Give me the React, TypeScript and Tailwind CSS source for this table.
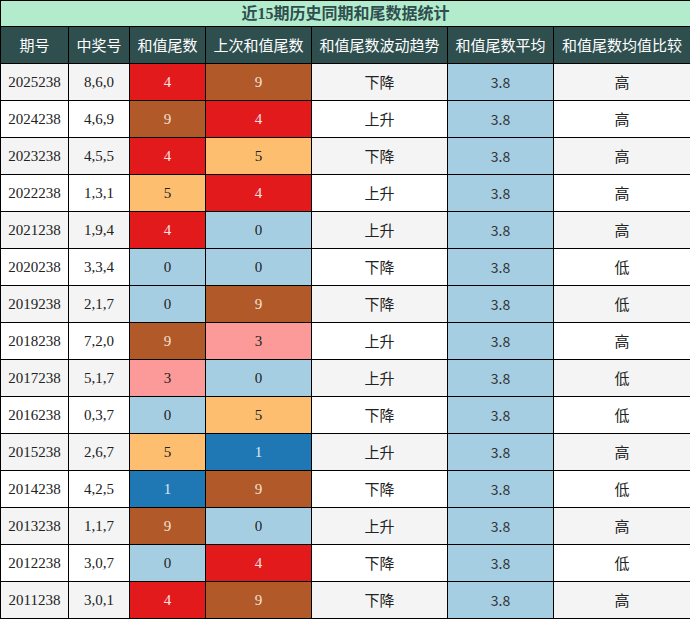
const rows: [string, string, number, number, string, string][] = [
  ['2025238', '8,6,0', 4, 9, '下降', '高'],
  ['2024238', '4,6,9', 9, 4, '上升', '高'],
  ['2023238', '4,5,5', 4, 5, '下降', '高'],
  ['2022238', '1,3,1', 5, 4, '上升', '高'],
  ['2021238', '1,9,4', 4, 0, '上升', '高'],
  ['2020238', '3,3,4', 0, 0, '下降', '低'],
  ['2019238', '2,1,7', 0, 9, '下降', '低'],
  ['2018238', '7,2,0', 9, 3, '上升', '高'],
  ['2017238', '5,1,7', 3, 0, '上升', '低'],
  ['2016238', '0,3,7', 0, 5, '下降', '低'],
  ['2015238', '2,6,7', 5, 1, '上升', '高'],
  ['2014238', '4,2,5', 1, 9, '下降', '低'],
  ['2013238', '1,1,7', 9, 0, '上升', '高'],
  ['2012238', '3,0,7', 0, 4, '下降', '低'],
  ['2011238', '3,0,1', 4, 9, '下降', '高'],
];

// colour per tail digit
const tailColor: Record<number, string> = {
  0: 'bg-[#a6cee3] text-[#222]',
  1: 'bg-[#1f78b4] text-[#dfeaf3]',
  3: 'bg-[#fb9a99] text-[#222]',
  4: 'bg-[#e31a1c] text-[#fbe3e3]',
  5: 'bg-[#fdbf6f] text-[#222]',
  9: 'bg-[#b15928] text-[#f3e2d6]',
};

const serif = { fontFamily: '"Liberation Serif", "Noto Serif CJK SC", serif' };
const cjk = { fontFamily: '"Noto Sans CJK SC", "Noto Sans", sans-serif' };

export default function App() {
  const headers = ['期号', '中奖号', '和值尾数', '上次和值尾数', '和值尾数波动趋势', '和值尾数平均', '和值尾数均值比较'];
  return (
    <div className="w-[690px] h-[619px] bg-white">
      <table className="w-[690px] table-fixed border-collapse border border-black text-center">
        <colgroup>
          <col className="w-[68px]" />
          <col className="w-[61px]" />
          <col className="w-[76px]" />
          <col className="w-[106px]" />
          <col className="w-[136px]" />
          <col className="w-[106px]" />
          <col className="w-[137px]" />
        </colgroup>
        <thead>
          <tr className="h-[26px]">
            <th
              colSpan={7}
              className="border border-black bg-[#b3eccd] text-[#2f4f4f] text-[16px] font-bold p-0"
              style={{ fontFamily: '"Liberation Serif", "Noto Sans CJK SC", serif' }}
            >
              近15期历史同期和尾数据统计
            </th>
          </tr>
          <tr className="h-[37px]">
            {headers.map((h) => (
              <th key={h} className="border border-black bg-[#2f4f4f] text-white text-[15px] font-normal p-0" style={cjk}>
                {h}
              </th>
            ))}
          </tr>
        </thead>
        <tbody>
          {rows.map((r, i) => {
            const bg = i % 2 === 0 ? 'bg-[#f4f4f4]' : 'bg-white';
            return (
              <tr key={r[0]} className={`h-[37px] ${bg}`}>
                <td className="border border-black text-[#222] text-[15px] p-0" style={serif}>{r[0]}</td>
                <td className="border border-black text-[#222] text-[15px] p-0" style={serif}>{r[1]}</td>
                <td className={`border border-black text-[15px] p-0 ${tailColor[r[2]]}`} style={serif}>{r[2]}</td>
                <td className={`border border-black text-[15px] p-0 ${tailColor[r[3]]}`} style={serif}>{r[3]}</td>
                <td className="border border-black text-[#222] text-[15px] p-0" style={cjk}>{r[4]}</td>
                <td className="border border-black bg-[#a6cee3] text-[#333] text-[14px] p-0" style={cjk}>3.8</td>
                <td className="border border-black text-[#222] text-[15px] p-0" style={cjk}>{r[5]}</td>
              </tr>
            );
          })}
        </tbody>
      </table>
    </div>
  );
}
